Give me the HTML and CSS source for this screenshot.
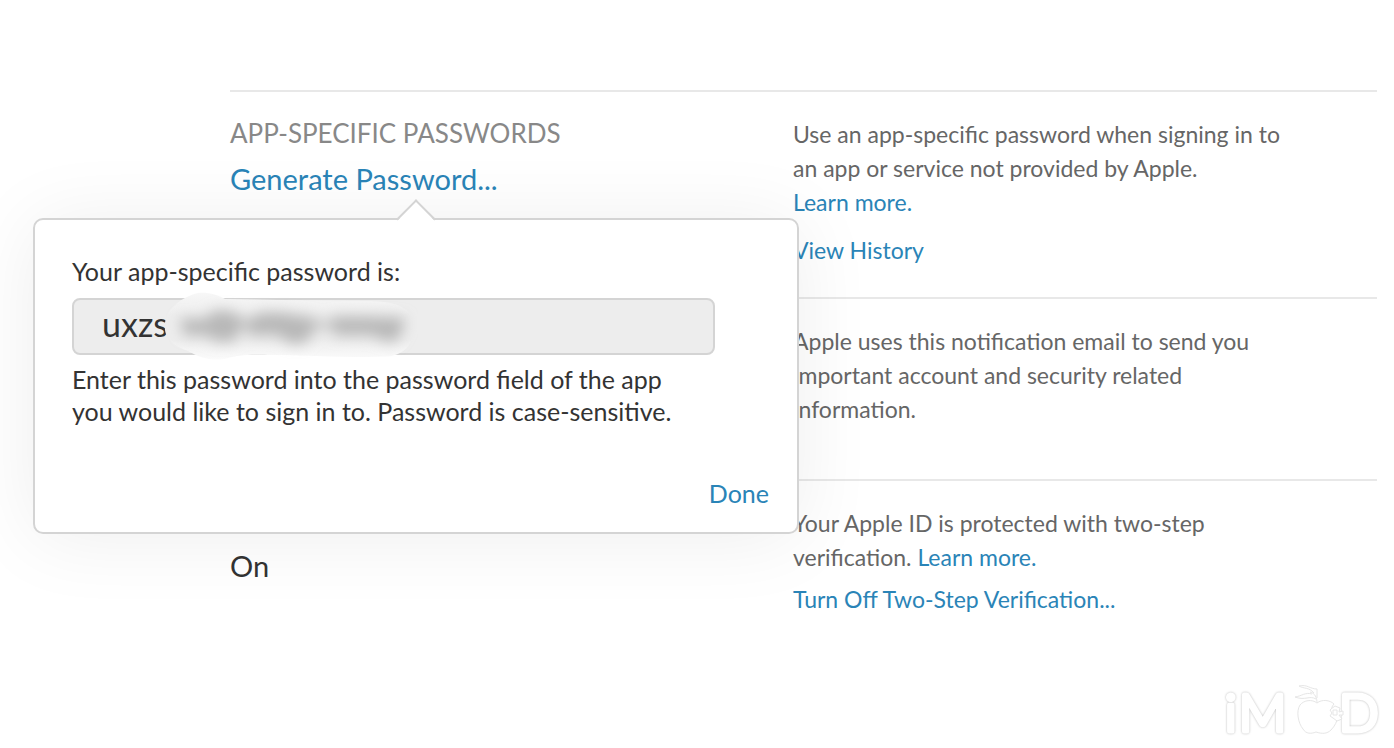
FILE: index.html
```
<!DOCTYPE html>
<html lang="en">
<head>
  <meta charset="UTF-8">
  <meta name="viewport" content="width=device-width, initial-scale=1">
  <title>App-Specific Passwords</title>
  <link rel="stylesheet" href="styles.css">
</head>
<body>
  <main class="account">
    <section class="row">
      <div class="setting">
        <h2 class="setting-title">APP-SPECIFIC PASSWORDS</h2>
        <div class="popover-anchor">
          <a class="setting-link" href="#">Generate Password...</a>
          <div class="popover" role="dialog" aria-labelledby="password-label">
            <label id="password-label" class="popover-label" for="password">Your app-specific password is:</label>
            <div class="password-box">
              <input id="password" class="password-input" type="text" value="uxzs" readonly>
              <svg class="smudge" width="254" height="74" viewBox="0 0 254 74" aria-hidden="true">
                <defs>
                  <filter id="soft" x="-20%" y="-80%" width="140%" height="260%"><feGaussianBlur stdDeviation="7"/></filter>
                  <linearGradient id="haze" x1="0" y1="0" x2="0" y2="1">
                    <stop offset="0" stop-color="#f7f7f7"/>
                    <stop offset=".35" stop-color="#ededed"/>
                    <stop offset=".7" stop-color="#ededed"/>
                    <stop offset="1" stop-color="#fbfbfb"/>
                  </linearGradient>
                </defs>
                <path fill="url(#haze)" d="M1 32C3 17 18 6 34 2c10-1 20 2 27 6l52 1 90 1c24 0 42 4 47 20 2 17-5 31-22 35-36 3-80-1-120-1-22-1-34 0-44 3-14 4-28 0-40-7C2 52 0 42 1 32z"/>
                <g fill="#b8b8b8" filter="url(#soft)">
                  <path d="M16 28h26l8-8h14l14 6v10l-8 14H50l-6-6H20z"/>
                  <path d="M84 28l14-6h20l24 4h8v14l-10 12h-14l-12-8H84z"/>
                  <path d="M70 31h20v6H70zM150 31h20v6h-20z"/>
                  <path d="M168 26h34l38 1v9l-8 14h-10l-14-6h-38z"/>
                </g>
              </svg>
            </div>
            <p class="popover-text">Enter this password into the password field of the app<br>you would like to sign in to. Password is case-sensitive.</p>
            <div class="popover-actions">
              <button class="done" type="button">Done</button>
            </div>
          </div>
        </div>
      </div>
      <div class="info info-passwords">
        <p>Use an app-specific password when signing in to<br>an app or service not provided by Apple.<br><a href="#">Learn more.</a></p>
        <p class="history"><a href="#">View History</a></p>
      </div>
    </section>

    <section class="row">
      <div class="setting"></div>
      <div class="info info-email">
        <p>Apple uses this notification email to send you<br>important account and security related<br>information.</p>
      </div>
    </section>

    <section class="row">
      <div class="setting setting-status">
        <p class="status">On</p>
      </div>
      <div class="info">
        <p>Your Apple ID is protected with two-step<br>verification. <a href="#">Learn more.</a></p>
        <p class="turn-off"><a href="#">Turn Off Two-Step Verification...</a></p>
      </div>
    </section>
  </main>

  <svg class="watermark" width="170" height="76" viewBox="0 0 170 76" role="img" aria-label="iMOD">
    <g class="watermark-text">
      <text x="3" y="59">i</text>
      <text x="17" y="59">M</text>
      <text x="117" y="59">D</text>
    </g>
    <g class="watermark-apple">
      <path d="M95 31c-5-4-13-3-17 2-4 6-2 18 3 24 3 5 8 5 13 3 6 2 11 2 15-2 4-4 6-9 7-13-6 0-9-8-4-13-4-4-12-5-17-1z"/>
      <path d="M95 31c0-5-2-10-7-11M94 27c-7-4-10 2-21-2 7-1 10-5 17-3M92 21C87 15 82 17 77 14c8-2 11 3 18 3v9"/>
      <path d="M109 37l4-3 5 2-1 4 4-1v4h-4l3 4-5 2-4-3-3-2 2-3-2-3zM111 38h4v5h-4z"/>
    </g>
  </svg>
</body>
</html>
```
FILE: styles.css
```
* {
  box-sizing: border-box;
}

body {
  margin: 0;
  background: #fff;
  color: #333;
  font-family: Lato, "Noto Sans", sans-serif;
  font-size: 25px;
  line-height: 34px;
}

h2, p {
  margin: 0;
}

a {
  color: #2a84b7;
  text-decoration: none;
}

.account {
  padding: 90px 17px 0 230px;
}

.row {
  display: grid;
  grid-template-columns: 563px 1fr;
  padding: 25px 0 29px;
  border-top: 2px solid #e8e8e8;
}

.setting-title {
  color: #888;
  font-size: 26px;
  font-weight: 400;
  line-height: 32px;
}

.setting-link,
.status {
  font-size: 29px;
}

.popover-anchor {
  position: relative;
  padding-top: 13px;
}

.setting-link {
  display: block;
}

.info {
  color: #666;
  font-size: 23px;
}

.info-passwords {
  padding-bottom: 1px;
}

.info-email {
  padding-bottom: 24px;
}

.history {
  padding-top: 14px;
}

.turn-off {
  padding-top: 8px;
}

.setting-status {
  padding-top: 43px;
}

/* Popover */
.popover {
  position: absolute;
  top: 69px;
  left: -197px;
  z-index: 1;
  width: 766px;
  padding: 34px 28px 22px 37px;
  background: #fff;
  border: 2px solid #d4d4d4;
  border-radius: 10px;
  box-shadow: 0 4px 80px rgba(0, 0, 0, 0.07);
}

.popover::before {
  content: "";
  position: absolute;
  top: -15px;
  left: 367px;
  width: 26px;
  height: 26px;
  background: linear-gradient(135deg, #fff 50%, transparent 50%);
  border: solid #d4d4d4;
  border-width: 2px 0 0 2px;
  transform: rotate(45deg);
}

.popover-label {
  display: block;
}

.password-box {
  position: relative;
  width: 643px;
  margin: 10px 0 8px;
}

.password-input {
  display: block;
  width: 100%;
  height: 57px;
  padding: 0 28px 6px;
  background: #ededed;
  border: 2px solid #d4d4d4;
  border-radius: 8px;
  color: #333;
  font: inherit;
  font-size: 34px;
  outline: none;
}

.smudge {
  position: absolute;
  top: -7px;
  left: 92px;
}

.popover-text {
  line-height: 32px;
}

.popover-actions {
  display: flex;
  justify-content: flex-end;
  padding-top: 49px;
}

.done {
  padding: 0;
  background: none;
  border: 0;
  color: #2a84b7;
  font: inherit;
  cursor: pointer;
}

/* Watermark */
.watermark {
  position: absolute;
  right: 2px;
  bottom: 0;
}

.watermark-text {
  fill: #fff;
  stroke: #fff;
  stroke-width: 5px;
  stroke-linejoin: round;
  font-size: 52px;
  font-weight: 300;
  filter: drop-shadow(0 0 1px #bbb);
}

.watermark-apple {
  fill: #fff;
  stroke: #e6e6e6;
  stroke-linejoin: round;
}
```
